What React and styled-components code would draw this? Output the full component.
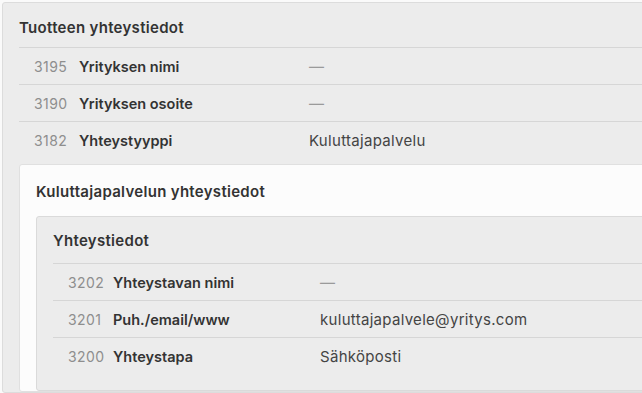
import styled, { createGlobalStyle } from 'styled-components';

const GlobalStyle = createGlobalStyle`
  body {
    margin: 0;
    background: #fafafa;
    font-family: Inter, "Liberation Sans", sans-serif;
    overflow: hidden;
  }
`;

const Page = styled.div`
  padding: 2px 0 0 2px;
`;

const Section = styled.section`
  width: 720px;
  box-sizing: border-box;
  background: #ececec;
  border: 1px solid #dcdcdc;
  border-radius: 3px;
  padding: 0 0 ${p => p.$bottom || 0}px 16px;
`;

const SectionTitle = styled.h3`
  margin: 0;
  box-sizing: border-box;
  height: ${p => p.$height}px;
  padding-top: ${p => p.$shift || 0}px;
  display: flex;
  align-items: center;
  font-size: 15px;
  font-weight: 600;
  letter-spacing: 0.3px;
  color: #333;
`;

const Row = styled.div`
  display: flex;
  align-items: center;
  height: 37px;
  border-top: 1px solid #d6d6d6;
  box-sizing: border-box;
`;

const Code = styled.span`
  width: 45px;
  padding-left: 15px;
  flex-shrink: 0;
  font-size: 14px;
  letter-spacing: 0.4px;
  color: #8e8e8e;
`;

const Label = styled.span`
  width: ${p => p.$width}px;
  flex-shrink: 0;
  font-size: 14.5px;
  font-weight: 600;
  color: #333;
`;

const Value = styled.span`
  font-size: 15px;
  letter-spacing: 0.3px;
  color: ${p => (p.$empty ? '#9a9a9a' : '#444')};
`;

const Card = styled.div`
  margin-top: 6px;
  background: #fcfcfc;
  border: 1px solid #e0e0e0;
  border-radius: 3px;
  padding: 0 0 0 16px;
`;

const Nested = styled(Section)`
  width: auto;
  border-color: #dadada;
`;

const Field = ({ code, label, value, labelWidth }) => (
  <Row>
    <Code>{code}</Code>
    <Label $width={labelWidth}>{label}</Label>
    <Value $empty={!value}>{value || '—'}</Value>
  </Row>
);

export default function App() {
  return (
    <Page>
      <GlobalStyle />
      <Section>
        <SectionTitle $height={44} $shift={5}>Tuotteen yhteystiedot</SectionTitle>
        <Field code="3195" label="Yrityksen nimi" labelWidth={230} />
        <Field code="3190" label="Yrityksen osoite" labelWidth={230} />
        <Field code="3182" label="Yhteystyyppi" value="Kuluttajapalvelu" labelWidth={230} />
        <Card>
          <SectionTitle $height={51} $shift={1}>Kuluttajapalvelun yhteystiedot</SectionTitle>
          <Nested $bottom={16}>
            <SectionTitle $height={46} $shift={1}>Yhteystiedot</SectionTitle>
            <Field code="3202" label="Yhteystavan nimi" labelWidth={207} />
            <Field code="3201" label="Puh./email/www" value="kuluttajapalvele@yritys.com" labelWidth={207} />
            <Field code="3200" label="Yhteystapa" value="Sähköposti" labelWidth={207} />
          </Nested>
        </Card>
      </Section>
    </Page>
  );
}
